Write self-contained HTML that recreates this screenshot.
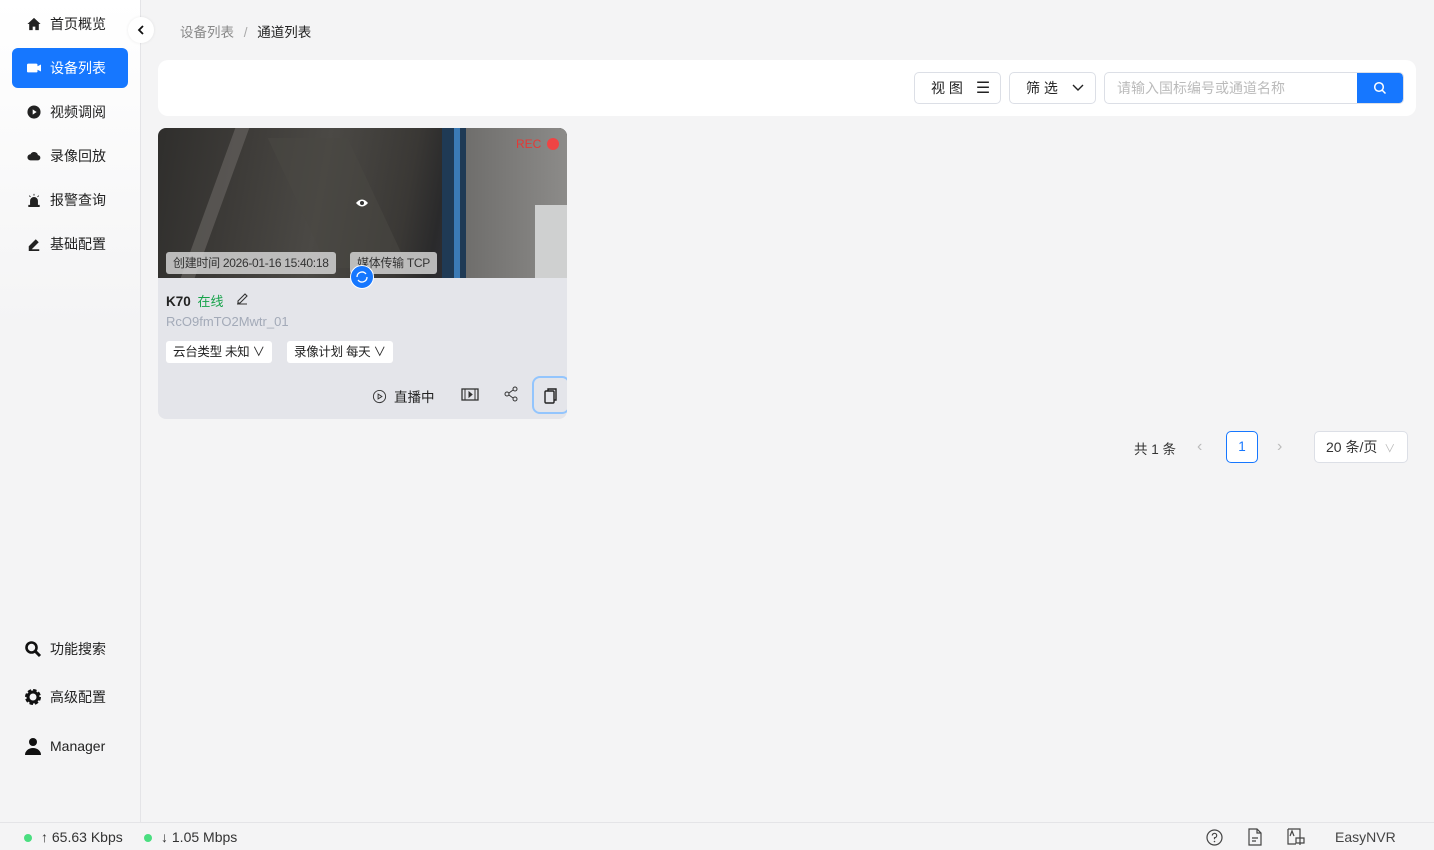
<!DOCTYPE html>
<html><head><meta charset="utf-8"><style>
*{box-sizing:border-box;margin:0;padding:0}
body{width:1434px;height:850px;background:#f4f4f5;font-family:"Liberation Sans","Noto Sans CJK SC",sans-serif;font-size:14px;color:#222;position:relative;overflow:hidden}
.side{position:absolute;left:0;top:0;width:141px;height:822px;border-right:1px solid #e4e4e7;background:linear-gradient(#fff,#f4f4f5 40%)}
.nav{position:absolute;left:12px;width:116px;height:40px;display:flex;align-items:center;padding-left:15px;font-size:14px;color:#222}
.nav svg{width:14px;height:14px;margin-right:9px}
.nav.act{background:#1677ff;color:#fff;border-radius:6px}
.nav.b svg{width:18px;height:18px;margin-right:8px;margin-left:-3px}
.foot{position:absolute;left:0;top:822px;width:1434px;height:28px;border-top:1px solid #e4e4e7;background:#f4f4f5;font-size:14px;color:#333}
.dot{position:absolute;width:8px;height:8px;border-radius:50%;background:#4ade80;top:11px}
.abs{position:absolute}
.btn{position:absolute;top:72px;height:32px;border:1px solid #dcdfe6;border-radius:5px;background:#fff;display:flex;align-items:center;font-size:14px}
.tag{position:absolute;height:22px;background:rgba(210,210,210,.85);border-radius:3px;font-size:12px;color:#333;line-height:22px;padding:0 7px;letter-spacing:-.3px}
.sel{position:absolute;height:22px;background:#fff;border-radius:3px;font-size:12.5px;line-height:22px;padding:0 7px;color:#222;letter-spacing:-.3px}
</style></head><body>
<div class="side">
 <div class="nav" style="top:4px"><svg viewBox="0 0 16 16"><path d="M8 1L0.5 8h2v7h4v-4h3v4h4V8h2z" fill="#222"/></svg>首页概览</div>
 <div class="nav act" style="top:48px"><svg viewBox="0 0 16 16"><rect x="0" y="3" width="12" height="10" rx="1.5" fill="#fff"/><path d="M12 6l4-2v8l-4-2z" fill="#fff"/></svg>设备列表</div>
 <div class="nav" style="top:92px"><svg viewBox="0 0 16 16"><circle cx="8" cy="8" r="7.5" fill="#222"/><path d="M6.5 5v6l4.5-3z" fill="#fff"/></svg>视频调阅</div>
 <div class="nav" style="top:136px"><svg viewBox="0 0 16 16"><path d="M4 13a3.5 3.5 0 0 1 0-7 4.5 4.5 0 0 1 8.5 1A3 3 0 0 1 12 13z" fill="#222"/></svg>录像回放</div>
 <div class="nav" style="top:180px"><svg viewBox="0 0 16 16"><path d="M4 14V9a4 4 0 0 1 8 0v5zM2 14h12v1.5H2zM8 1v2M2.5 3l1.5 1.5M13.5 3L12 4.5" fill="#222" stroke="#222"/></svg>报警查询</div>
 <div class="nav" style="top:224px"><svg viewBox="0 0 16 16"><path d="M3 11l7-7 2 2-7 7H3zM2 15h12" stroke="#222" stroke-width="2" fill="#222"/></svg>基础配置</div>
 <div class="nav b" style="top:629px"><svg viewBox="0 0 18 18"><circle cx="7.5" cy="7.5" r="5" fill="none" stroke="#111" stroke-width="2.6"/><path d="M11 11l5 5" stroke="#111" stroke-width="3"/></svg>功能搜索</div>
 <div class="nav b" style="top:677px"><svg viewBox="0 0 18 18"><circle cx="9" cy="9" r="6" fill="none" stroke="#111" stroke-width="4" stroke-dasharray="3 1.7"/><circle cx="9" cy="9" r="5" fill="none" stroke="#111" stroke-width="3"/></svg>高级配置</div>
 <div class="nav b" style="top:726px"><svg viewBox="0 0 18 18"><circle cx="9" cy="5" r="4" fill="#111"/><path d="M1 18a8 7 0 0 1 16 0z" fill="#111"/></svg>Manager</div>
</div>
<div class="abs" style="left:128px;top:17px;width:26px;height:26px;border-radius:50%;background:#fff;box-shadow:0 0 3px rgba(0,0,0,.08)"><svg style="margin:8px 0 0 9px" width="8" height="10" viewBox="0 0 8 10"><path d="M6 1L2 5l4 4" stroke="#111" fill="none" stroke-width="1.8"/></svg></div>
<div class="abs" style="left:180px;top:21px;font-size:13.5px;color:#888">设备列表 <span style="margin:0 6px;color:#aaa">/</span> <span style="color:#222">通道列表</span></div>
<div class="abs" style="left:158px;top:60px;width:1258px;height:56px;background:#fff;border-radius:10px"></div>
<div class="btn" style="left:914px;width:87px;padding-left:16px">视 图<span style="margin-left:13px;font-size:16px">☰</span></div>
<div class="btn" style="left:1009px;width:87px;padding-left:16px">筛 选<svg style="margin-left:14px" width="12" height="8" viewBox="0 0 12 8"><path d="M1 1l5 5 5-5" stroke="#222" fill="none" stroke-width="1.4"/></svg></div>
<div class="btn" style="left:1104px;width:300px;padding-left:12px;color:#bbb;overflow:hidden">请输入国标编号或通道名称<div style="position:absolute;right:0;top:-1px;width:46px;height:32px;background:#1677ff;border-radius:0 5px 5px 0;display:flex;align-items:center;justify-content:center"><svg width="14" height="14" viewBox="0 0 14 14"><circle cx="6" cy="6" r="4.3" stroke="#fff" stroke-width="1.5" fill="none"/><path d="M9 9l3.5 3.5" stroke="#fff" stroke-width="1.5"/></svg></div></div>
<div class="abs" style="left:158px;top:128px;width:409px;height:291px;background:#e4e5ea;border-radius:8px;overflow:hidden">
 <div class="abs" style="left:0;top:0;width:409px;height:150px;overflow:hidden;background:linear-gradient(100deg,#2f2e2c 0%,#3d3b38 20%,#4b4945 40%,#3a3835 60%,#2a2a2b 68%,#2c2c30 70%)">
  <div class="abs" style="left:50px;top:0;width:14px;height:150px;background:#6a6864;transform:skewX(-20deg);opacity:.6"></div>
  <div class="abs" style="left:140px;top:10px;width:80px;height:130px;background:#4a4743;transform:skewX(25deg);opacity:.6"></div>
  <div class="abs" style="left:284px;top:0;width:24px;height:150px;background:#1f3a55"></div>
  <div class="abs" style="left:296px;top:0;width:6px;height:150px;background:#3b7ab5"></div>
  <div class="abs" style="left:308px;top:0;width:101px;height:150px;background:linear-gradient(90deg,#6f6e6c,#8c8b89)"></div>
  <div class="abs" style="left:377px;top:77px;width:32px;height:73px;background:#cfd0d0"></div>
  <div class="abs" style="left:358px;top:9px;font-size:12px;color:#e53935">REC</div>
  <div class="abs" style="left:389px;top:10px;width:12px;height:12px;border-radius:50%;background:#ef4444"></div>
  <svg class="abs" style="left:197px;top:69px" width="14" height="12" viewBox="0 0 14 12"><path d="M1 6q6-7 12 0q-6 7-12 0z" fill="#fff"/><circle cx="7" cy="6" r="2" fill="#333"/></svg>
 </div>
 <div class="tag" style="left:8px;top:124px">创建时间 2026-01-16 15:40:18</div>
 <div class="tag" style="left:192px;top:124px">媒体传输 TCP</div>
 <div class="abs" style="left:192px;top:137px;width:24px;height:24px;border-radius:50%;background:#1677ff;border:1px solid #fff"><svg width="22" height="22" viewBox="0 0 22 22"><path d="M6 11a5 5 0 0 1 9-3M16 11a5 5 0 0 1-9 3" stroke="#fff" fill="none" stroke-width="1.3"/></svg></div>
 <div class="abs" style="left:8px;top:163px;font-size:13.5px;font-weight:bold;color:#222">K70 <span style="color:#16a34a;font-weight:normal;margin-left:3px;font-size:13px">在线</span></div>
 <svg class="abs" style="left:77px;top:163px" width="14" height="14" viewBox="0 0 14 14"><path d="M3 10l7-7 2 2-7 7H3zM2 13h10" stroke="#333" fill="none" stroke-width="1.1"/></svg>
 <div class="abs" style="left:8px;top:186px;font-size:13px;color:#a3aab8">RcO9fmTO2Mwtr_01</div>
 <div class="sel" style="left:8px;top:213px">云台类型 未知 ∨</div>
 <div class="sel" style="left:129px;top:213px">录像计划 每天 ∨</div>
 <div class="abs" style="left:214px;top:258px;font-size:13.5px;color:#222;display:flex;align-items:center"><svg width="15" height="15" viewBox="0 0 16 16" style="margin-right:7px"><circle cx="8" cy="8" r="6.5" stroke="#333" fill="none"/><path d="M6.5 5.5v5l4-2.5z" stroke="#333" fill="none"/></svg>直播中</div>
 <svg class="abs" style="left:303px;top:259px" width="18" height="15" viewBox="0 0 18 15"><rect x="1" y="2" width="16" height="11" stroke="#333" fill="none" stroke-width="1.3"/><path d="M4 2v11M14 2v11M8 5v5l3-2.5z" stroke="#333" fill="#333"/></svg>
 <svg class="abs" style="left:345px;top:258px" width="16" height="16" viewBox="0 0 16 16"><circle cx="4" cy="8" r="2" stroke="#333" fill="none"/><circle cx="12" cy="3" r="2" stroke="#333" fill="none"/><circle cx="12" cy="13" r="2" stroke="#333" fill="none"/><path d="M6 7l4-3M6 9l4 3" stroke="#333"/></svg>
 <div class="abs" style="left:374px;top:248px;width:38px;height:38px;border:2px solid #93c5fd;border-radius:8px"><svg style="margin:9px 0 0 9px" width="16" height="18" viewBox="0 0 16 18"><rect x="2" y="4" width="9" height="12" rx="1" stroke="#222" fill="none" stroke-width="1.4"/><path d="M5 4V2h8v11h-2" stroke="#222" fill="none" stroke-width="1.4"/></svg></div>
</div>
<div class="abs" style="left:1134px;top:438px;font-size:13.5px;color:#333">共 1 条</div>
<div class="abs" style="left:1197px;top:438px;color:#bbb;font-size:16px">‹</div>
<div class="abs" style="left:1226px;top:431px;width:32px;height:32px;border:1px solid #1677ff;border-radius:5px;color:#1677ff;text-align:center;line-height:30px;font-size:13.5px;background:#fff">1</div>
<div class="abs" style="left:1277px;top:438px;color:#bbb;font-size:16px">›</div>
<div class="abs" style="left:1314px;top:431px;width:94px;height:32px;border:1px solid #dcdfe6;border-radius:5px;background:#fff;font-size:14px;line-height:30px;padding-left:11px;color:#333">20 条/页 <span style="color:#bbb;font-size:11px;margin-left:3px">∨</span></div>
<div class="foot">
 <div class="dot" style="left:24px"></div><div class="abs" style="left:41px;top:6px">↑ 65.63 Kbps</div>
 <div class="dot" style="left:144px"></div><div class="abs" style="left:161px;top:6px">↓ 1.05 Mbps</div>
 <svg class="abs" style="left:1206px;top:6px" width="17" height="17" viewBox="0 0 17 17"><circle cx="8.5" cy="8.5" r="7.5" stroke="#444" fill="none" stroke-width="1.2"/><path d="M6.3 6.5a2.2 2.2 0 1 1 2.2 2.2v1.6" stroke="#444" fill="none" stroke-width="1.2"/><circle cx="8.5" cy="12.5" r=".8" fill="#444"/></svg>
 <svg class="abs" style="left:1248px;top:5px" width="14" height="18" viewBox="0 0 14 18"><path d="M1 1h8l4 4v12H1zM9 1v4h4M4 10h6M4 13h4" stroke="#444" fill="none" stroke-width="1.2"/></svg>
 <svg class="abs" style="left:1287px;top:5px" width="18" height="18" viewBox="0 0 18 18"><path d="M1 1h12v7M1 1v15h8" stroke="#444" fill="none" stroke-width="1.2"/><path d="M3 8l2-5 2 5M9 10h8v5H9zM13 8v9" stroke="#444" fill="none" stroke-width="1.2"/></svg>
 <div class="abs" style="left:1335px;top:6px;color:#444">EasyNVR</div>
</div>
</body></html>
